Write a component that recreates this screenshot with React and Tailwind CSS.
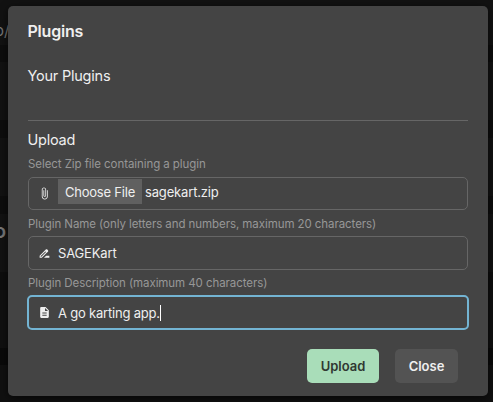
import { MdAttachFile, MdDescription, MdDriveFileRenameOutline } from "react-icons/md";

function Field({ label, labelClass, className, icon, children }) {
  return (
    <div>
      <div className={`text-[11.5px] leading-4 tracking-[-0.07px] whitespace-nowrap text-[#979797] ${labelClass}`}>{label}</div>
      <div className={`flex items-center rounded-[5px] text-[13px] tracking-[-0.16px] whitespace-nowrap ${className}`}>
        <span className="flex w-3.5 shrink-0 justify-center">{icon}</span>
        {children}
      </div>
    </div>
  );
}

function Backdrop() {
  return (
    <div className="absolute inset-0 flex flex-col text-[#777777]">
      <div className="h-[45px] bg-[#121212] pt-[19px] text-[15px] leading-6">
        <span className="-ml-[5px]">o/</span>
      </div>
      <div className="h-[17px] bg-[#0d0d0d]" />
      <div className="h-[58px] bg-[#121212]" />
      <div className="h-[18px] bg-[#0d0d0d]" />
      <div className="h-[58px] bg-[#121212]" />
      <div className="h-[18px] bg-[#0d0d0d]" />
      <div className="h-[58px] bg-[#121212] pt-[5px] text-[20px] font-semibold leading-6">
        <span className="-ml-[6px]">o</span>
      </div>
      <div className="h-[18px] bg-[#0d0d0d]" />
      <div className="h-[58px] bg-[#101010]" />
      <div className="h-[17px] bg-[#0a0a0a]" />
      <div className="flex-1 bg-[#101010]" />
    </div>
  );
}

export default function App() {
  return (
    <div className="relative h-[402px] w-[493px] overflow-hidden bg-[#101010] px-2 pt-1.5 font-['Inter',sans-serif] text-[#efefef]">
      <Backdrop />
      <div className="relative h-[390px] w-[480px] rounded-[5px] bg-[#444444] px-5 pt-[13px] shadow-[0_2px_8px_rgba(0,0,0,0.6)]">
        <h1 className="-ml-[0.5px] text-[16px] font-semibold leading-6 tracking-[-0.2px]">Plugins</h1>
        <h2 className="-ml-[0.5px] mt-[21px] text-[14.5px] leading-6 tracking-[-0.22px]">Your Plugins</h2>
        <hr className="mt-8 border-[#666666]" />
        <h2 className="-ml-[0.5px] mt-[7px] text-[14.5px] leading-6 tracking-[-0.25px]">Upload</h2>
        <Field
          label="Select Zip file containing a plugin"
          labelClass="mt-1"
          className="mt-[5px] h-[33px] border border-[#666666] pl-2"
          icon={<MdAttachFile className="size-[13px]" />}
        >
          <span className="mb-1 ml-[7px] flex h-[25px] w-[84px] items-center justify-center bg-[#606060] pt-0.5 tracking-[-0.2px]">
            Choose File
          </span>
          <span className="mb-0.5 ml-[3px]">sagekart.zip</span>
        </Field>
        <Field
          label="Plugin Name (only letters and numbers, maximum 20 characters)"
          labelClass="mt-[6px]"
          className="mt-[4px] h-[34px] border border-[#666666] pl-2"
          icon={<MdDriveFileRenameOutline className="size-[13px]" />}
        >
          <span className="ml-[7px] pt-0.5">SAGEKart</span>
        </Field>
        <Field
          label="Plugin Description (maximum 40 characters)"
          labelClass="mt-[5px]"
          className="-mx-px mt-[4px] h-[35px] border-2 border-[#73b4d3] pl-2"
          icon={<MdDescription className="size-[13px]" />}
        >
          <span className="ml-[7px] pt-0.5 tracking-[-0.2px]">A go karting app.</span>
          <span className="h-4 w-px bg-white" />
        </Field>
        <div className="mt-[19px] flex justify-end gap-4 pr-[10px] text-[13px] font-semibold">
          <button className="h-[34px] w-[72px] rounded-[5px] bg-[#a9ddb9] pt-px text-[#303832]">Upload</button>
          <button className="h-[34px] w-[63px] rounded-[5px] bg-[#535353] pt-px">Close</button>
        </div>
      </div>
    </div>
  );
}
